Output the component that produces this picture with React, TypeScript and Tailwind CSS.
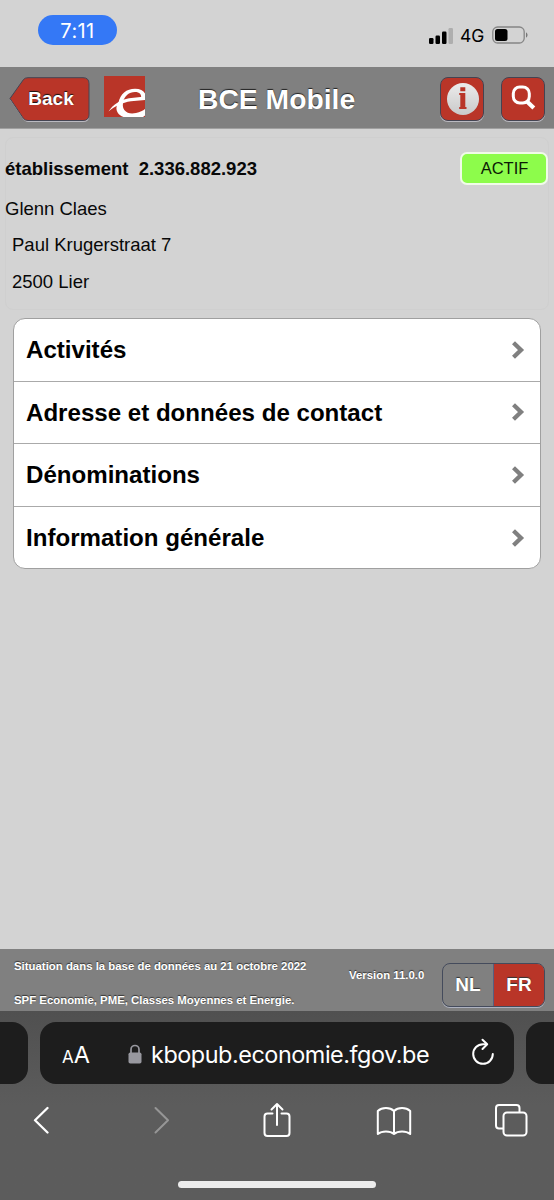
import React from 'react';

const MENU_ITEMS = [
  'Activités',
  'Adresse et données de contact',
  'Dénominations',
  'Information générale',
];

function StatusBar() {
  return (
    <div className="flex h-[67px] items-start justify-between pl-[38px] pr-[25px] pt-[15px] font-['Inter',sans-serif]">
      <div className="flex h-[30px] w-[79px] items-center justify-center rounded-full bg-[#3478f6] pt-px text-[20px] tracking-[0.4px] text-white">
        7:11
      </div>
      <div className="flex h-10 items-center">
        <svg width="26" height="18" viewBox="0 0 26 18" className="mt-px">
          <rect x="0" y="11" width="4.5" height="6" rx="1.2" fill="#000" />
          <rect x="6.5" y="8.5" width="4.5" height="8.5" rx="1.2" fill="#000" />
          <rect x="13" y="4.5" width="4.5" height="12.5" rx="1.2" fill="#000" />
          <rect x="19.500" y="1" width="4.5" height="16" rx="1.2" fill="#aeaeae" />
        </svg>
        <span className="ml-[5px] mt-0.5 w-[26px] whitespace-nowrap text-[17.5px] leading-none text-black">4G</span>
        <svg width="37" height="18" viewBox="0 0 37 18" className="ml-1.5">
          <rect x="0.8" y="1" width="31.4" height="16" rx="4.8" fill="none" stroke="#858585" strokeWidth="1.3" />
          <rect x="3" y="3" width="12.5" height="12" rx="2.5" fill="#000" />
          <path d="M34 6.5c2 .5 2 4.500 0 5z" fill="#777" />
        </svg>
      </div>
    </div>
  );
}

function Header() {
  return (
    <header className="flex h-[62px] items-start border-b border-[#a0a0a0] bg-[#808080] pt-[9px] pl-[9px] pr-[9px]">
      <button className="relative mt-px h-[45px] w-[81px] text-[19px] font-bold text-white [text-shadow:0_-1px_1px_#111]">
        <svg width="81" height="46" viewBox="0 0 81 46" className="absolute left-0 top-0">
          <path d="M1 22.500 15 3Q17 1.500 19 1.500H74Q80 1.500 80 7.500V39.500Q80 45 74 45H19Q17 45 15 43Z" fill="#b9b9c0" />
          <path d="M1 21.500 14.500 2.500Q16 .7 19 .7H74Q80 .7 80 6.700V37.500Q80 43.500 74 43.500H19Q16 43.500 14.500 41.500Z" fill="#b93528" stroke="#444452" />
        </svg>
        <span className="relative left-[1.500px] top-0">Back</span>
      </button>
      <svg width="41" height="41" viewBox="0 0 41 41" className="ml-[14px]">
        <rect width="41" height="41" fill="#b93528" />
        {/* swoosh that forms the crossbar */}
        <path d="M4.500 35.500C9 28.500 17 23.500 25 22.300L41 20.500V24L27 25.200C18 26.500 11 30 4.500 35.500Z" fill="#fff" />
        {/* upper bowl */}
        <path d="M14.500 27C16 18 22.500 12.800 31 12.800 36 12.800 39.500 14.500 41 17.500V23H37C38 18.500 35.500 16 31 16 25 16 20.500 20 19 26Z" fill="#fff" />
        {/* lower bowl */}
        <path d="M12.500 31C13 28.500 14 26.500 15 25.500L19.500 25C18.500 28 18.500 31.500 20.300 34 23 37.500 27.500 38 32 37 36 36 39 34.800 41 33V39.500L39 41H19.500C14.500 39 12 35.500 12.500 31Z" fill="#fff" />
      </svg>
      <h1 className="ml-[53px] mt-[2px] w-[200px] whitespace-nowrap text-[28.3px] leading-[42px] font-bold text-white [text-shadow:0_-1px_1px_#222]">
        BCE Mobile
      </h1>
      <div className="ml-auto mt-px flex gap-[17px]">
        <button className="flex size-[44px] items-center justify-center rounded-lg border border-[#444452] bg-[#b93528] shadow-[0_1px_0_#b9b9c0]">
          <svg width="34" height="34" viewBox="0 0 34 34" className="relative left-[0.500px]">
            <defs>
              <linearGradient id="disc" x1="0" y1="0" x2="0" y2="1">
                <stop offset="0" stopColor="#ececec" />
                <stop offset="1" stopColor="#c9c9c9" />
              </linearGradient>
            </defs>
            <circle cx="17" cy="17" r="16" fill="url(#disc)" />
            <path d="M14.300 5.300h5v4h-5zM13.200 11h6.100v14h1.200v2h-7.300v-2h1.100V13h-1.100z" fill="#b93528" />
          </svg>
        </button>
        <button className="flex size-[44px] items-center justify-center rounded-lg border border-[#444452] bg-[#b93528] shadow-[0_1px_0_#b9b9c0]">
          <svg width="28" height="28" viewBox="0 0 28 28" fill="none" stroke="#fff">
            <rect x="4.300" y="2" width="16" height="16" rx="6.500" strokeWidth="3" />
            <path d="m17.500 16 7.300 7" strokeWidth="4.200" />
          </svg>
        </button>
      </div>
    </header>
  );
}

function Establishment() {
  return (
    <section className="mx-[5px] mt-2 flex h-[173px] justify-between rounded-lg border border-[#cfcfcf] text-[18.5px] leading-[37px] text-[#080808]">
      <div className="-ml-px pt-[12px]">
        <p className="whitespace-pre font-bold">{'établissement  2.336.882.923'}</p>
        <p className="mt-[3px]">Glenn Claes</p>
        <p className="-mt-px pl-[7px]">Paul Krugerstraat 7</p>
        <p className="pl-[7px]">2500 Lier</p>
      </div>
      <div className="mt-[14px] h-[33px] w-[88px] rounded-[7px] border-2 border-[#f0fbe8] bg-[#8dfc4b] pl-px text-center text-[16.5px] leading-[29px] text-[#0c1a05]">
        ACTIF
      </div>
    </section>
  );
}

function Menu() {
  return (
    <ul className="mx-[13px] mt-2 h-[251px] overflow-hidden rounded-xl border border-[#a0a0a0] bg-white">
      {MENU_ITEMS.map((item) => (
        <li
          key={item}
          className="flex h-[62.5px] items-center justify-between border-b border-[#aaa] pl-3 pr-[15px] text-[24.1px] font-bold text-black last:border-b-0"
        >
          <span className="relative top-[0.8px]">{item}</span>
          <svg width="13" height="20" viewBox="0 0 13 20" fill="none" stroke="#808080" strokeWidth="4.300">
            <path d="m1.500 2.800 7.500 7.200-7.500 7.200" />
          </svg>
        </li>
      ))}
    </ul>
  );
}

function Footer() {
  return (
    <footer className="flex h-[62px] bg-[#808080] pl-[14px] pr-[9px] text-[11.4px] font-bold text-white [text-shadow:0_-1px_1px_#333]">
      <div className="w-[335px] whitespace-nowrap leading-[34px]">
        <p>Situation dans la base de données au 21 octobre 2022</p>
        <p>SPF Economie, PME, Classes Moyennes et Energie.</p>
      </div>
      <p className="pt-[17px] leading-[18px]">Version 11.0.0</p>
      <div className="ml-auto mt-[14px] flex h-[44px] w-[103px] overflow-hidden rounded-lg border border-[#444b5c] text-[19px] leading-[42px] shadow-[0_1px_0_#aeb2c0]">
        <span className="flex-1 text-center">NL</span>
        <span className="flex-1 border-l border-[#565f80] bg-[#b93528] text-center">FR</span>
      </div>
    </footer>
  );
}

function BrowserBar() {
  return (
    <div className="h-[189px] overflow-hidden bg-linear-to-b from-[#505050] via-[#5c5c5c] via-50% to-[#5c5c5c] pt-[11px] font-['Inter',sans-serif] text-white">
      <div className="flex h-[62px] gap-3">
        <div className="w-7 rounded-r-2xl bg-[#1d1d1d]" />
        <div className="flex w-[474px] items-center rounded-2xl bg-[#1d1d1d] pl-[22px] pr-[19px]">
          <div className="mt-[3px] flex w-[65px] items-baseline leading-none">
            <span className="text-[17px]">A</span>
            <span className="text-[23.5px]">A</span>
          </div>
          <svg width="14" height="20" viewBox="0 0 14 20" className="ml-px mt-px">
            <path d="M3 9V5.500a4 4 0 0 1 8 0V9" fill="none" stroke="#98989f" strokeWidth="1.700" />
            <rect x="0.500" y="8.500" width="13" height="11" rx="1.800" fill="#98989f" />
          </svg>
          <span className="ml-[9px] mt-[3px] whitespace-nowrap text-[23.4px] tracking-[-0.45px]">kbopub.economie.fgov.be</span>
          <svg width="24" height="28" viewBox="0 0 24 28" fill="none" stroke="#fff" strokeWidth="2" strokeLinecap="round" strokeLinejoin="round" className="relative -top-px ml-auto">
            <path d="M14.500 6.200H12A9.800 9.800 0 1 0 21.800 16" />
            <path d="m11.500 1.700 4.700 4.500-4.700 4.800" />
          </svg>
        </div>
        <div className="w-7 rounded-l-2xl bg-[#1d1d1d]" />
      </div>
      <div className="flex h-[72px] items-center justify-between pl-[33px] pr-[26px]">
        <svg width="16" height="28" viewBox="0 0 16 28" fill="none" stroke="#fff" strokeWidth="2.300" strokeLinecap="round" strokeLinejoin="round">
          <path d="M14.500 2 2 14.300 14.500 26.500" />
        </svg>
        <svg width="16" height="28" viewBox="0 0 16 28" fill="none" stroke="#969696" strokeWidth="2" strokeLinecap="round" strokeLinejoin="round" className="relative -left-px ml-[72px]">
          <path d="M1.500 2 14 14.300 1.500 26.500" />
        </svg>
        <svg width="28" height="36" viewBox="0 0 28 36" fill="none" stroke="#fff" strokeWidth="2" strokeLinecap="round" strokeLinejoin="round" className="relative -left-[2px] ml-[61px]">
          <path d="M9.500 11.500H4.500Q1.500 11.500 1.500 14.500V31Q1.500 34 4.500 34H23.500Q26.500 34 26.500 31V14.500Q26.500 11.500 23.500 11.500H18.500" />
          <path d="M14 23V2M8.500 7.500 14 2l5.500 5.500" />
        </svg>
        <svg width="36" height="30" viewBox="0 0 36 30" fill="none" stroke="#fff" strokeWidth="2" strokeLinejoin="round" className="relative -left-px top-px ml-[50px]">
          <path d="M18 5C14 1 6 1 1.800 5V28C6 24.500 14 24.500 18 28 22 24.500 30 24.500 34.200 28V5C30 1 22 1 18 5ZM18 5V28" />
        </svg>
        <svg width="34" height="34" viewBox="0 0 34 34" fill="none" stroke="#fff" strokeWidth="2" className="ml-[48px]">
          <path d="M9.500 25.500H5Q2 25.500 2 22.500V5Q2 2 5 2H22.500Q25.500 2 25.500 5V9.500" />
          <rect x="9.500" y="9.500" width="23" height="23" rx="3.500" />
        </svg>
      </div>
      <div className="mx-auto mt-[25px] h-[7px] w-[198px] rounded-full bg-[#ececec]" />
    </div>
  );
}

export default function App() {
  return (
    <div className="flex h-[1200px] w-[554px] flex-col overflow-hidden bg-[#d3d3d3] font-['Liberation_Sans',Arial,sans-serif]">
      <StatusBar />
      <Header />
      <main className="flex-1">
        <Establishment />
        <Menu />
      </main>
      <Footer />
      <BrowserBar />
    </div>
  );
}
